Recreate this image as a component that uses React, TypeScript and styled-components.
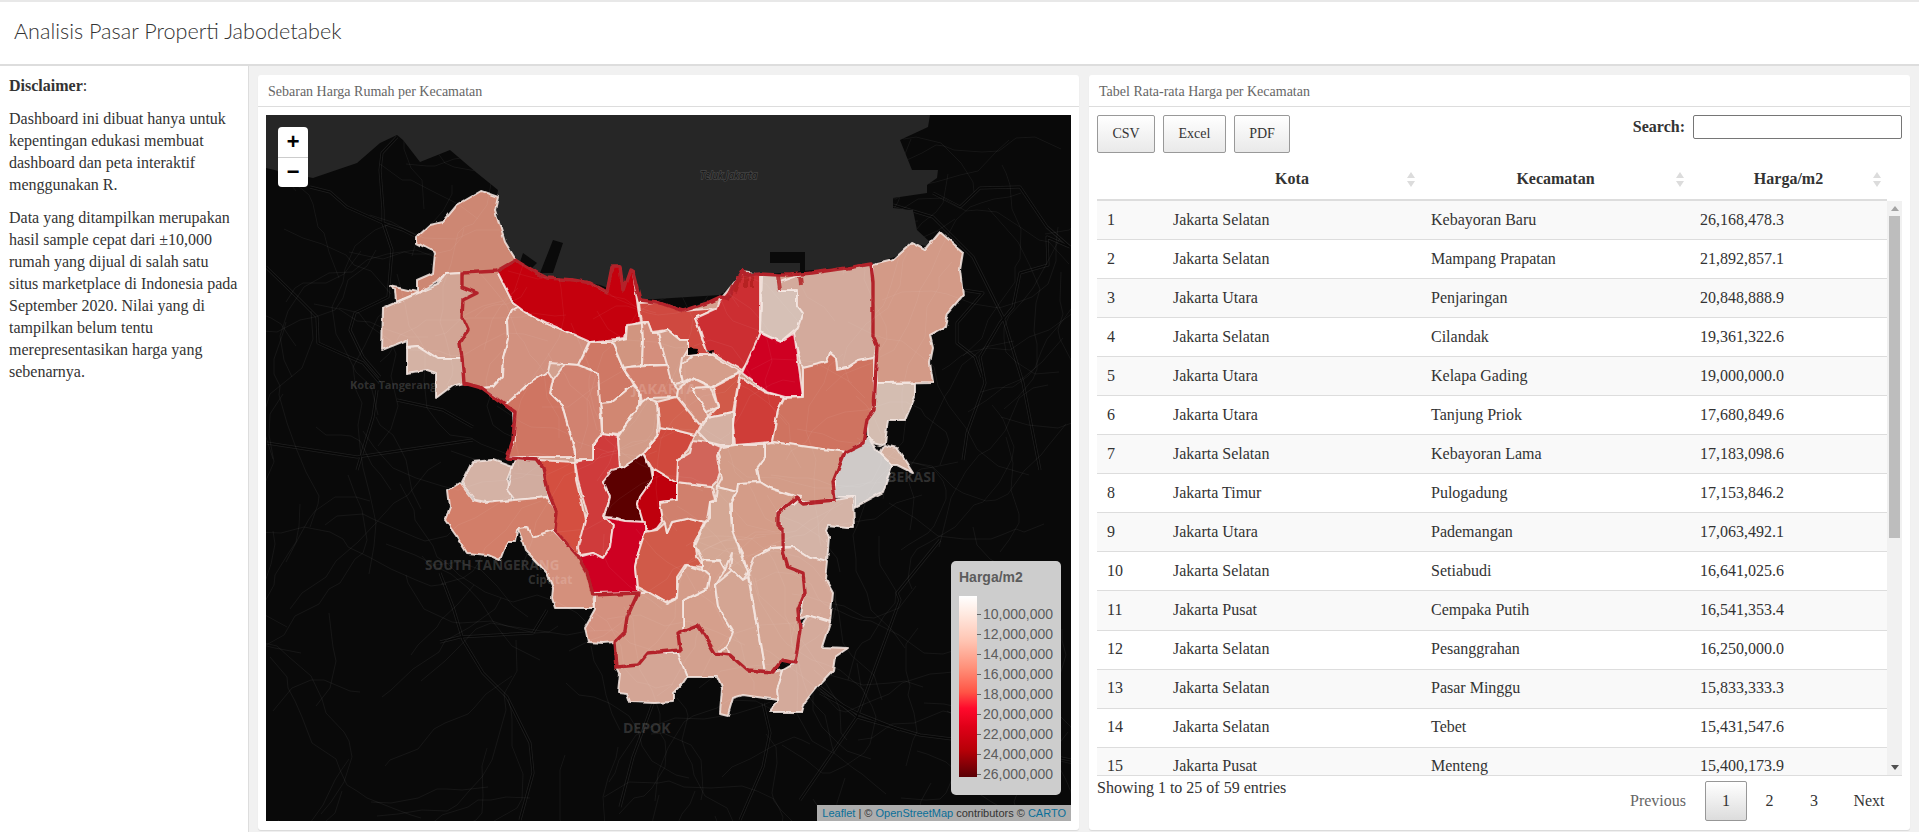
import React from 'react'
import styled, { createGlobalStyle } from 'styled-components'

const serif = '"Liberation Serif", "Times New Roman", serif'
const sans = '"Liberation Sans", Arial, sans-serif'

const GlobalStyle = createGlobalStyle`
    html, body {
        margin: 0;
        padding: 0;
        height: 100%;
        overflow: hidden;
    }
    body {
        font-family: ${serif};
        color: #333;
    }
    * {
        box-sizing: border-box;
    }
`

const Page = styled.div`
    width: 1919px;
    height: 832px;
    display: flex;
    flex-direction: column;
    background: #f1f1f1;
    overflow: hidden;
`

const TopBar = styled.header`
    height: 66px;
    flex: none;
    display: flex;
    align-items: center;
    padding: 0 14px 5px;
    background: #fff;
    border-top: 2px solid #e8e8e8;
    border-bottom: 2px solid #ddd;
`

const Title = styled.h1`
    margin: 0;
    font-family: Lato, 'Open Sans', sans-serif;
    font-weight: 300;
    font-size: 21.6px;
    color: #333;
`

const Body = styled.div`
    flex: 1;
    min-height: 0;
    display: flex;
`

const Sidebar = styled.aside`
    width: 249px;
    flex: none;
    padding: 9px 8px 0 9px;
    background: #fff;
    border-right: 1px solid #ddd;
    font-size: 16px;
    line-height: 22px;
    color: #333;

    p {
        margin: 0 0 11px;
    }
`

const Main = styled.main`
    flex: 1;
    min-width: 0;
    display: grid;
    grid-template-columns: 821px 821px;
    gap: 10px;
    padding: 9px 9px 2px;
`

const Card = styled.section`
    display: flex;
    flex-direction: column;
    min-height: 0;
    background: #fff;
    border-radius: 3px;
    box-shadow: 0 1px 1px rgba(0, 0, 0, 0.1);
`

const CardHeader = styled.div`
    height: 32px;
    flex: none;
    padding: 2px 10px 0;
    display: flex;
    align-items: center;
    font-size: 14px;
    color: #666;
    border-bottom: 1px solid #ddd;
`

const MapBody = styled.div`
    padding: 8px;
`

const MapFrame = styled.div`
    position: relative;
    height: 706px;
    background: #262626;
    overflow: hidden;

    svg.base {
        display: block;
    }
`

const ZoomControl = styled.div`
    position: absolute;
    top: 12px;
    left: 12px;
    width: 30px;
    border-radius: 4px;
    background: #fff;
    overflow: hidden;
`

const ZoomButton = styled.div`
    height: 30px;
    padding-top: 2px;
    display: flex;
    align-items: center;
    justify-content: center;
    font: bold 22px 'Liberation Mono', monospace;
    color: #000;

    & + & {
        border-top: 1px solid #ccc;
    }
`

const Legend = styled.div`
    position: absolute;
    left: 685px;
    top: 446px;
    width: 110px;
    height: 234px;
    padding: 6px 8px;
    border-radius: 5px;
    background: #cdcdcd;
    font-family: ${sans};
    color: #5c5c5c;
`

const LegendTitle = styled.div`
    font-size: 14px;
    font-weight: bold;
    line-height: 20px;
    margin-bottom: 9px;
`

const LegendScale = styled.div`
    display: flex;
    height: 181px;
`

const LegendBar = styled.div`
    width: 18px;
    height: 181px;
    background: linear-gradient(
        to bottom,
        #fff 0%,
        #ffe9e0 10%,
        #ffc4b2 25%,
        #ff8f78 40%,
        #ff5546 53%,
        #ff0a2c 62%,
        #e00018 72%,
        #b80008 85%,
        #5a0005 100%
    );
`

const LegendTicks = styled.div`
    position: relative;
    flex: 1;
`

const LegendLabel = styled.div<{ $top: number }>`
    position: absolute;
    left: 6px;
    top: ${p => p.$top}px;
    font-size: 14px;
    line-height: 16px;
    white-space: nowrap;

    &::before {
        content: '';
        position: absolute;
        left: -6px;
        top: 8px;
        width: 4px;
        height: 1px;
        background: #666;
    }
`

const Attribution = styled.div`
    position: absolute;
    right: 0;
    bottom: 0;
    height: 16px;
    padding: 0 5px;
    background: #adadad;
    font: 11px/16px ${sans};
    color: #333;
    white-space: nowrap;

    a {
        color: #0a6f99;
        text-decoration: none;
    }
`

const TableBody = styled.div`
    flex: 1;
    min-height: 0;
    display: flex;
    flex-direction: column;
    padding: 8px 8px 0;
`

const Toolbar = styled.div`
    height: 47px;
    flex: none;
    display: flex;
    justify-content: space-between;
`

const ButtonGroup = styled.div`
    display: flex;
    gap: 8px;
`

const ExportButton = styled.button<{ $width: number }>`
    width: ${p => p.$width}px;
    height: 38px;
    padding: 0;
    border: 1px solid #999;
    border-radius: 2px;
    background: linear-gradient(to bottom, #fff 0%, #e9e9e9 100%);
    font: 14px ${serif};
    color: #333;
`

const SearchLabel = styled.label`
    display: flex;
    height: 24px;
    align-items: center;
    gap: 8px;
    font-size: 16px;
    font-weight: bold;
    color: #333;
`

const SearchInput = styled.input`
    width: 209px;
    height: 24px;
    border: 1px solid #767676;
    border-radius: 2px;
    background: #fff;
`

const columns = '66px 258px 269px 197px'

const HeadRow = styled.div`
    height: 39px;
    flex: none;
    width: 790px;
    display: grid;
    grid-template-columns: ${columns};
    border-bottom: 2px solid #ddd;
`

const HeadCell = styled.div`
    display: flex;
    align-items: center;
    justify-content: center;
    padding: 0 10px 3px;
    position: relative;
    font-size: 16px;
    font-weight: bold;
    color: #333;

    svg {
        position: absolute;
        right: 6px;
        top: 10px;
    }
`

const ScrollFrame = styled.div`
    flex: none;
    height: 575px;
    display: flex;
    border-bottom: 1px solid #ddd;
`

const Rows = styled.div`
    width: 790px;
    overflow: hidden;
`

const Row = styled.div<{ $odd: boolean }>`
    height: 39.05px;
    display: grid;
    grid-template-columns: ${columns};
    align-items: center;
    padding-bottom: 1px;
    background: ${p => (p.$odd ? '#f9f9f9' : '#fff')};
    border-bottom: 1px solid #ddd;
    font-size: 16px;
    color: #333;

    span {
        padding-left: 10px;
    }
`

const ScrollTrack = styled.div`
    width: 15px;
    flex: none;
    display: flex;
    flex-direction: column;
    align-items: center;
    background: #f1f1f1;
`

const ScrollArrow = styled.div`
    height: 15px;
    flex: none;
    display: flex;
    align-items: center;
    justify-content: center;
`

const ScrollThumb = styled.div`
    width: 11px;
    height: 322px;
    margin-bottom: auto;
    background: #bdbdbd;
`

const Footer = styled.div`
    flex: 1;
    display: flex;
    justify-content: space-between;
    font-size: 16px;
`

const Info = styled.div`
    padding-top: 2px;
    line-height: 20px;
`

const Pagination = styled.div`
    display: flex;
    align-items: center;
    height: 40px;
    margin-top: 5px;
`

const PageLink = styled.div<{ $active?: boolean; $muted?: boolean; $width: number }>`
    width: ${p => p.$width}px;
    height: 40px;
    display: flex;
    align-items: center;
    justify-content: center;
    border: 1px solid ${p => (p.$active ? '#979797' : 'transparent')};
    border-radius: 2px;
    background: ${p => (p.$active ? 'linear-gradient(to bottom, #fff 0%, #dcdcdc 100%)' : 'none')};
    color: ${p => (p.$muted ? '#666' : '#333')};
`

const LandLabel = styled.text<{ $size: number }>`
    font-family: 'Open Sans', ${sans};
    font-weight: bold;
    font-size: ${p => p.$size}px;
    fill: rgba(255, 255, 255, 0.17);
`

const regions: [string, string][] = [
    ['#cd8773', '481,191 498,197 495,210 505,242 516,260 497,271 462,273 445,274 437,282 420,292 396,302 395,290 390,286 417,292 417,280 433,273 435,253 430,250 417,243 417,237 430,225 443,222 457,205'],
    ['#d2a595', '383,308 397,302 437,285 445,274 462,273 462,287 477,293 463,300 462,317 468,330 460,343 462,358 437,358 418,346 407,347 407,340 382,350'],
    ['#d4b2a4', '407,347 418,346 437,358 462,358 464,383 452,386 436,398 436,373 427,370 407,373'],
    ['#d08c79', '462,273 497,271 513,303 525,312 517,307 512,310 507,320 508,340 503,358 502,377 493,387 482,388 464,383 462,358 460,343 468,330 462,317 463,300 477,293 462,287'],
    ['#d2917f', '525,312 547,323 570,333 590,340 578,365 565,364 550,363 548,372 527,385 515,397 505,405 493,395 482,388 493,387 502,377 503,358 508,340 507,320 512,310 517,307'],
    ['#c5000f', '516,260 537,273 547,278 573,280 590,283 607,292 612,267 620,267 623,290 630,270 633,272 640,322 627,327 625,338 590,342 570,333 547,323 525,312 513,303 497,271'],
    ['#cf4a40', '640,312 639,303 657,302 683,311 717,308 695,318 707,352 712,353 708,356 687,355 688,340 680,340 668,330 652,332 648,322 642,322'],
    ['#cc2f33', '695,318 717,308 720,300 743,272 760,275 760,330 755,353 742,370 713,353 707,352 700,330'],
    ['#d6c0b6', '762,275 778,275 780,290 797,290 797,305 803,313 798,327 780,342 760,332'],
    ['#d3aa9c', '780,282 800,275 812,273 847,268 871,264 873,282 873,337 877,345 874,357 858,360 847,367 837,369 836,358 830,353 827,362 817,365 803,368 795,343 794,333 798,327 803,313 797,305 797,290 780,290'],
    ['#cf0022', '760,333 780,342 794,333 803,397 785,397 767,392 742,373'],
    ['#cf3c39', '740,377 765,392 784,398 778,410 772,442 735,445 733,425 737,393'],
    ['#cf7360', '803,368 827,362 830,353 836,358 837,369 847,367 858,360 874,357 874,410 867,420 863,443 845,452 772,442 778,410 784,398 803,397'],
    ['#d39a87', '873,265 893,260 912,243 925,250 940,232 963,252 960,270 963,295 948,313 945,327 930,335 933,348 930,363 933,382 877,383 877,345 873,337 873,282'],
    ['#d4bdb1', '877,383 915,383 915,397 905,420 888,420 885,443 880,445 873,443 868,437 867,423 873,408'],
    ['#cfcac8', '843,453 863,442 868,437 873,445 880,453 892,465 883,492 855,507 855,497 835,497 835,480'],
    ['#d4b0a0', '880,453 885,445 897,448 913,473 897,465 892,465'],
    ['#d39c88', '765,443 772,442 845,452 835,480 835,498 815,503 803,502 798,497 770,488 760,482 757,468 765,457'],
    ['#d39c88', '717,448 735,445 765,445 765,457 757,468 760,482 738,483 737,492 717,487 722,478 717,463 720,457'],
    ['#d49c88', '738,483 760,482 770,488 790,495 802,497 797,499 793,505 787,505 777,512 780,527 783,533 782,547 770,548 757,557 762,572 748,573 742,553 732,533 732,502 737,492'],
    ['#d4b3a6', '800,500 815,503 835,500 853,497 854,527 847,527 828,525 826,530 829,537 827,562 810,558 793,547 782,547 783,533 780,527 777,512 787,505 793,505 797,499'],
    ['#d4b2a5', '462,482 472,462 493,460 512,467 507,480 512,500 487,502 475,500 463,485'],
    ['#d1ac9f', '512,467 515,460 537,460 543,468 548,490 548,497 515,500 507,490 510,477'],
    ['#d27e69', '448,490 460,483 473,500 485,503 515,500 548,497 557,513 555,530 543,535 532,537 527,527 517,530 515,542 507,542 500,560 488,555 467,553 457,537 445,520 450,507'],
    ['#d4907b', '518,528 528,527 532,537 553,530 577,555 587,573 593,595 595,608 555,608 552,598 553,587 547,573 533,558 525,550'],
    ['#d45040', '537,460 575,462 576,480 582,505 585,520 580,545 578,555 555,530 557,513 548,490 543,468'],
    ['#cf3b3a', '575,462 593,458 593,445 602,433 613,435 618,437 620,467 603,482 610,497 604,515 613,525 610,547 603,558 593,553 580,555 578,547 587,512 578,480'],
    ['#5b0005', '643,453 650,468 652,480 640,497 638,505 643,522 625,521 617,518 605,517 610,497 603,482 612,470 623,467'],
    ['#bf0010', '652,468 677,483 677,500 660,502 663,520 657,528 650,532 643,528 643,522 638,505 640,497 652,480'],
    ['#ce0022', '605,517 625,521 645,522 645,532 637,557 635,567 637,590 638,592 592,593 587,575 579,557 593,553 603,558 610,547 613,525'],
    ['#d05a48', '645,532 657,530 665,523 667,533 672,522 690,518 705,522 695,540 697,557 703,567 685,565 677,577 677,597 665,602 652,595 637,587 635,567 637,557'],
    ['#d0806d', '677,483 712,487 715,500 710,502 707,520 705,522 690,518 672,522 667,533 665,523 663,520 660,502 677,500'],
    ['#d1655a', '693,440 708,442 720,447 717,457 720,473 717,482 712,487 677,483 678,460 690,453'],
    ['#d04a3c', '657,437 660,427 675,430 695,435 688,450 678,460 677,483 652,468 643,453'],
    ['#cf7865', '590,342 612,342 623,368 633,385 612,402 600,403 597,390 596,372 578,365'],
    ['#d19580', '612,342 627,338 628,325 642,323 643,340 642,365 628,367 623,368'],
    ['#d48e7b', '642,323 648,322 652,333 658,333 668,365 642,365 643,340'],
    ['#d39b88', '658,333 668,330 680,340 688,340 688,348 682,358 680,370 683,383 675,385 670,380 667,365'],
    ['#d27f6c', '628,367 668,365 672,382 678,390 677,397 648,398 642,402 640,392 623,368'],
    ['#d59e8b', '682,365 693,355 713,355 740,372 712,387 692,378 683,383 680,370'],
    ['#d15a4a', '740,373 733,412 708,417 718,407 713,387'],
    ['#d48f7b', '678,390 692,378 710,387 692,388 707,412 708,417 700,425 692,418 677,397'],
    ['#d69a88', '692,388 710,387 718,407 707,412'],
    ['#d2624f', '657,402 677,397 700,425 695,435 675,430 660,427 658,413'],
    ['#d5b0a2', '708,417 733,412 733,445 720,445 708,442 698,432'],
    ['#d18772', '600,403 612,402 633,385 640,392 640,405 628,422 618,435 602,433 602,418'],
    ['#d29b88', '647,398 657,402 658,422 657,437 643,453 634,460 623,467 620,467 618,437 628,422 640,405 642,402'],
    ['#d1826f', '565,364 578,365 598,373 600,403 602,433 593,443 593,460 575,460 575,450 562,405 550,393 553,380'],
    ['#cf7462', '505,405 527,385 548,372 553,380 550,393 562,405 575,453 575,457 507,457 515,440 513,412'],
    ['#d4a794', '717,487 737,492 730,503 732,530 748,573 743,580 730,568 732,553 725,570 720,560 702,560 695,545 705,523 710,518 710,502 715,502'],
    ['#d59f8c', '702,560 720,561 725,570 715,585 718,607 733,632 727,647 715,653 698,625 683,632 683,600 708,588 710,577 702,570'],
    ['#d49c89', '687,565 702,570 710,577 708,588 683,600 683,632 678,633 680,650 648,653 638,665 617,667 615,642 625,632 627,617 638,593 650,593 667,603 677,598 678,580'],
    ['#d4a593', '733,570 743,580 748,577 765,672 747,670 730,655 727,647 733,632 718,607 715,585'],
    ['#d4a593', '748,573 755,557 773,548 783,548 788,567 803,573 805,593 798,610 800,630 795,663 782,660 773,672 765,672'],
    ['#d4a797', '783,548 793,547 810,558 828,562 826,580 833,593 830,622 807,615 800,618 805,593 802,573 788,567'],
    ['#d4aa9b', '807,615 830,622 822,647 848,648 835,657 833,670 817,687 805,702 802,712 770,712 778,702 777,690 783,670 795,663 800,630'],
    ['#d3a08e', '680,650 678,633 698,625 715,653 730,655 747,670 773,672 783,670 777,690 778,700 743,695 733,698 728,715 720,713 722,688 717,677 687,677 683,667 677,653'],
    ['#d4a595', '617,667 638,665 648,653 678,653 687,677 683,683 673,693 673,702 655,703 630,702 627,693 618,692 620,673'],
    ['#d49280', '595,595 638,593 627,617 625,632 615,642 603,643 588,642 585,628 595,610'],
]

const landShape =
    '266,168 287,173 313,178 357,163 380,143 397,135 403,140 420,162 450,150 477,173 498,190 495,210 505,242 516,260 540,275 600,285 640,300 720,295 745,275 760,275 870,265 907,253 912,243 930,247 940,242 930,242 917,230 913,210 893,208 893,198 927,193 927,185 937,178 938,170 912,170 900,140 928,127 930,115 1071,115 1071,821 266,821'

const islands = [
    '523,253 537,263 528,272 520,262',
    '553,240 563,243 553,273 540,273',
    '770,252 805,252 805,263 770,263',
    '800,263 805,263 805,275 800,275',
]

const lakes = ['688,348 698,349 697,354 688,355', '706,352 714,350 713,354']

const roads = [
    'M266,267 L300,300 317,317 318,343 340,353 363,363 380,383',
    'M310,187 L330,192 347,207 383,223 403,230 417,237',
    'M397,137 L382,153 380,170 383,210 383,223 392,250 388,297 355,313 350,330 363,357 380,377',
    'M267,443 L357,457 473,440',
    'M377,390 L373,417 357,470',
    'M397,400 L443,410 473,427',
    'M893,205 L933,217 973,257 1003,317 1023,383 1040,470',
    'M1070,247 L1047,237 1048,265 1020,273 1013,307 1000,323 980,357 985,383 967,433 963,460',
    'M963,290 L983,293 957,323 957,343 975,357 982,377',
    'M933,193 L960,207 980,188 1020,187 1047,227 1070,247',
    'M440,642 L460,637 533,633 547,610',
    'M440,573 L453,607 463,640 483,673 507,697 530,743 533,773 520,820',
    'M653,703 L633,757 620,807',
    'M763,703 L770,733 763,767 740,820',
    'M820,693 L857,713 900,730',
    'M820,687 L857,717 900,600 897,593 940,540',
    'M857,717 L800,800',
    'M857,717 L920,735 1000,745 1071,760',
]

// faint street texture, seeded so that every render gives the same lines
const buildStreets = (count: number) => {
    let seed = 1931
    const next = () => {
        seed = (seed * 16807) % 2147483647
        return seed / 2147483647
    }
    const streets: string[] = []
    for (let i = 0; i < count; i++) {
        let x = 266 + next() * 805
        let y = 130 + next() * 690
        let heading = next() * Math.PI * 2
        const steps = 5 + Math.floor(next() * 9)
        let d = `M${x.toFixed(0)},${y.toFixed(0)} L`
        for (let s = 0; s < steps; s++) {
            heading += (next() - 0.5) * 1.3
            const length = 8 + next() * 24
            x += Math.cos(heading) * length
            y += Math.sin(heading) * length
            d += `${x.toFixed(0)},${y.toFixed(0)} `
        }
        streets.push(d)
    }
    return streets
}

const streets = buildStreets(190)

const dkiBorder =
    'M462,273 L497,271 516,260 537,273 547,278 573,280 590,283 607,292 612,267 620,267 623,290 630,270 633,272 640,300 657,302 683,311 707,303 720,297 727,298 743,270 745,275 760,274 778,275 790,275 812,273 847,268 871,264 873,282 873,337 877,345 874,410 867,420 863,443 845,452 833,482 835,500 803,503 797,498 778,513 778,525 783,530 783,550 788,567 803,573 805,593 798,610 800,630 795,663 782,660 773,672 747,670 730,655 715,653 698,625 678,633 680,650 648,653 638,665 617,667 615,642 625,632 627,617 638,593 593,595 587,573 577,555 555,530 557,513 548,490 543,468 537,460 507,458 513,440 515,412 505,405 482,388 464,383 462,358 460,343 468,330 462,317 463,300 477,293 462,287 Z'

const piers = 'M727,300 L733,285 M735,292 L741,275 M746,275 L746,288 M752,275 L752,288 M778,276 L780,290 M800,277 L801,285'

const legendValues = ['10,000,000', '12,000,000', '14,000,000', '16,000,000', '18,000,000', '20,000,000', '22,000,000', '24,000,000', '26,000,000']

const tableRows = [
    ['1', 'Jakarta Selatan', 'Kebayoran Baru', '26,168,478.3'],
    ['2', 'Jakarta Selatan', 'Mampang Prapatan', '21,892,857.1'],
    ['3', 'Jakarta Utara', 'Penjaringan', '20,848,888.9'],
    ['4', 'Jakarta Selatan', 'Cilandak', '19,361,322.6'],
    ['5', 'Jakarta Utara', 'Kelapa Gading', '19,000,000.0'],
    ['6', 'Jakarta Utara', 'Tanjung Priok', '17,680,849.6'],
    ['7', 'Jakarta Selatan', 'Kebayoran Lama', '17,183,098.6'],
    ['8', 'Jakarta Timur', 'Pulogadung', '17,153,846.2'],
    ['9', 'Jakarta Utara', 'Pademangan', '17,063,492.1'],
    ['10', 'Jakarta Selatan', 'Setiabudi', '16,641,025.6'],
    ['11', 'Jakarta Pusat', 'Cempaka Putih', '16,541,353.4'],
    ['12', 'Jakarta Selatan', 'Pesanggrahan', '16,250,000.0'],
    ['13', 'Jakarta Selatan', 'Pasar Minggu', '15,833,333.3'],
    ['14', 'Jakarta Selatan', 'Tebet', '15,431,547.6'],
    ['15', 'Jakarta Pusat', 'Menteng', '15,400,173.9'],
]

const SortIcon = () => (
    <svg width='8' height='16' viewBox='0 0 8 16'>
        <path d='M4 0 L8 6 L0 6 Z M0 9 L8 9 L4 15 Z' fill='#dcdcdc' />
    </svg>
)

const MapDrawing = () => (
    <svg className='base' width='805' height='706' viewBox='266 115 805 706'>
        <defs>
            <clipPath id='land'>
                <polygon points={landShape} />
            </clipPath>
            <filter id='wobble' x='266' y='115' width='805' height='706' filterUnits='userSpaceOnUse'>
                <feTurbulence type='fractalNoise' baseFrequency='0.09' numOctaves='2' seed='4' />
                <feDisplacementMap in='SourceGraphic' scale='4' xChannelSelector='R' yChannelSelector='G' />
            </filter>
        </defs>
        <polygon points={landShape} fill='#090909' />
        {islands.map(points => (
            <polygon key={points} points={points} fill='#0a0a0a' />
        ))}
        <g clipPath='url(#land)' fill='none' strokeLinejoin='round'>
            {roads.map(d => (
                <path key={d} d={d} stroke='#1f1f1f' strokeWidth='3' />
            ))}
            {roads.map(d => (
                <path key={d} d={d} stroke='#060606' strokeWidth='1.5' />
            ))}
        </g>
        <g filter='url(#wobble)'>
            <path d={dkiBorder} fill='#d3a08e' />
            <g strokeLinejoin='round' stroke='#f5e8e3' strokeWidth='2' strokeOpacity='0.85'>
                {regions.map(([fill, points]) => (
                    <polygon key={points} points={points} fill={fill} />
                ))}
            </g>
            {lakes.map(points => (
                <polygon key={points} points={points} fill='#050505' />
            ))}
            <path d={piers} fill='none' stroke='#b22222' strokeWidth='4' strokeOpacity='0.85' />
            <path d={dkiBorder} fill='none' stroke='#b3242a' strokeWidth='3.4' strokeLinejoin='round' />
        </g>
        <g clipPath='url(#land)' fill='none' stroke='#fff' strokeOpacity='0.055' strokeWidth='1'>
            {streets.map(d => (
                <path key={d} d={d} />
            ))}
        </g>
        <LandLabel $size={11} x='350' y='389'>Kota Tangerang</LandLabel>
        <LandLabel $size={13.5} x='425' y='570'>SOUTH TANGERANG</LandLabel>
        <LandLabel $size={12} x='528' y='584'>Ciputat</LandLabel>
        <LandLabel $size={14} x='623' y='733'>DEPOK</LandLabel>
        <LandLabel $size={14} x='887' y='482'>BEKASI</LandLabel>
        <LandLabel $size={15} x='632' y='394'>JAKARTA</LandLabel>
        <text x='700' y='179' fontFamily='"Open Sans", sans-serif' fontSize='10' fontStyle='italic' fill='#141414' stroke='#454545' strokeWidth='1.4' paintOrder='stroke'>Teluk Jakarta</text>
    </svg>
)

const App = () => (
    <Page>
        <GlobalStyle />
        <TopBar>
            <Title>Analisis Pasar Properti Jabodetabek</Title>
        </TopBar>
        <Body>
            <Sidebar>
                <p>
                    <strong>Disclaimer</strong>:
                </p>
                <p>Dashboard ini dibuat hanya untuk kepentingan edukasi membuat dashboard dan peta interaktif menggunakan R.</p>
                <p>
                    Data yang ditampilkan merupakan hasil sample cepat dari ±10,000 rumah yang dijual di salah satu situs marketplace di
                    Indonesia pada September 2020. Nilai yang di tampilkan belum tentu merepresentasikan harga yang sebenarnya.
                </p>
            </Sidebar>
            <Main>
                <Card>
                    <CardHeader>Sebaran Harga Rumah per Kecamatan</CardHeader>
                    <MapBody>
                        <MapFrame>
                            <MapDrawing />
                            <ZoomControl>
                                <ZoomButton>+</ZoomButton>
                                <ZoomButton>−</ZoomButton>
                            </ZoomControl>
                            <Legend>
                                <LegendTitle>Harga/m2</LegendTitle>
                                <LegendScale>
                                    <LegendBar />
                                    <LegendTicks>
                                        {legendValues.map((value, index) => (
                                            <LegendLabel key={value} $top={10 + index * 20}>
                                                {value}
                                            </LegendLabel>
                                        ))}
                                    </LegendTicks>
                                </LegendScale>
                            </Legend>
                            <Attribution>
                                <a href='#leaflet'>Leaflet</a> | © <a href='#osm'>OpenStreetMap</a> contributors © <a href='#carto'>CARTO</a>
                            </Attribution>
                        </MapFrame>
                    </MapBody>
                </Card>
                <Card>
                    <CardHeader>Tabel Rata-rata Harga per Kecamatan</CardHeader>
                    <TableBody>
                        <Toolbar>
                            <ButtonGroup>
                                <ExportButton $width={58}>CSV</ExportButton>
                                <ExportButton $width={63}>Excel</ExportButton>
                                <ExportButton $width={56}>PDF</ExportButton>
                            </ButtonGroup>
                            <SearchLabel>
                                Search:
                                <SearchInput />
                            </SearchLabel>
                        </Toolbar>
                        <HeadRow>
                            <HeadCell />
                            <HeadCell>
                                Kota
                                <SortIcon />
                            </HeadCell>
                            <HeadCell>
                                Kecamatan
                                <SortIcon />
                            </HeadCell>
                            <HeadCell>
                                Harga/m2
                                <SortIcon />
                            </HeadCell>
                        </HeadRow>
                        <ScrollFrame>
                            <Rows>
                                {tableRows.map((row, index) => (
                                    <Row key={row[0]} $odd={index % 2 === 0}>
                                        {row.map(cell => (
                                            <span key={cell}>{cell}</span>
                                        ))}
                                    </Row>
                                ))}
                            </Rows>
                            <ScrollTrack>
                                <ScrollArrow>
                                    <svg width='8' height='5'>
                                        <path d='M4 0 L8 5 L0 5 Z' fill='#a3a3a3' />
                                    </svg>
                                </ScrollArrow>
                                <ScrollThumb />
                                <ScrollArrow>
                                    <svg width='8' height='5'>
                                        <path d='M0 0 L8 0 L4 5 Z' fill='#505050' />
                                    </svg>
                                </ScrollArrow>
                            </ScrollTrack>
                        </ScrollFrame>
                        <Footer>
                            <Info>Showing 1 to 25 of 59 entries</Info>
                            <Pagination>
                                <PageLink $muted $width={94}>Previous</PageLink>
                                <PageLink $active $width={42}>1</PageLink>
                                <PageLink $width={45}>2</PageLink>
                                <PageLink $width={44}>3</PageLink>
                                <PageLink $width={66}>Next</PageLink>
                            </Pagination>
                        </Footer>
                    </TableBody>
                </Card>
            </Main>
        </Body>
    </Page>
)

export default App
